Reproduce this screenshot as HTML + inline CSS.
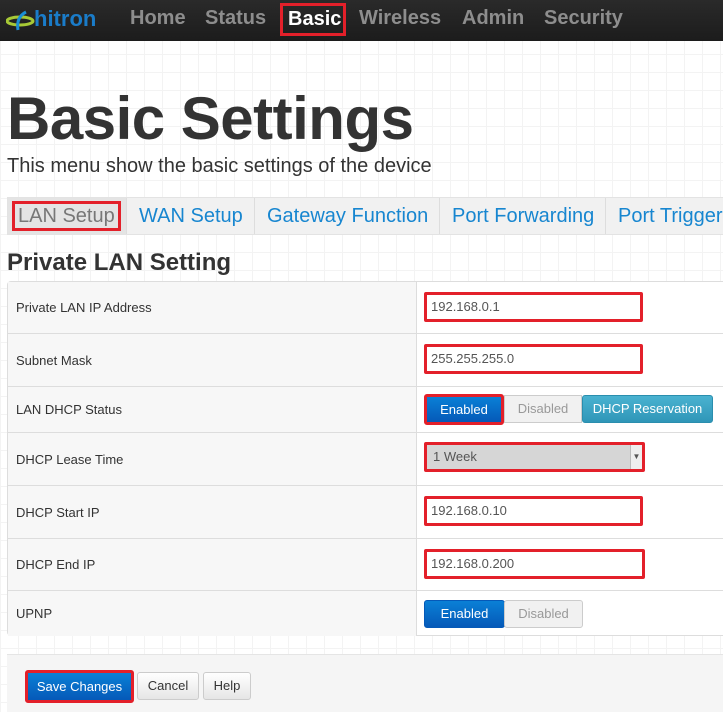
<!DOCTYPE html>
<html><head><meta charset="utf-8"><style>
*{box-sizing:border-box;margin:0;padding:0}
body{width:723px;height:712px;overflow:hidden;position:relative;font-family:"Liberation Sans",sans-serif;background:#fff;
background-image:linear-gradient(#f3f3f3 1px,transparent 1px),linear-gradient(90deg,#f3f3f3 1px,transparent 1px);background-size:18px 18px;}
.a{position:absolute}
.nav{left:0;top:0;width:723px;height:41px;background:linear-gradient(#2a2a2a,#1c1c1c);}
.nav span{position:absolute;top:7px;font-size:20px;font-weight:bold;color:#8d8d8d;white-space:nowrap}
h1{position:absolute;left:7px;top:84px;font-size:60px;font-weight:bold;color:#333;letter-spacing:-0.5px}
.sub{left:7px;top:155px;font-size:20px;color:#333}
.tabs{left:7px;top:197px;width:716px;height:38px;background:#f1f1f1;border:1px solid #e3e3e3;border-right:none;overflow:hidden}
.tab{position:absolute;top:0;height:36px;line-height:36px;font-size:20px;color:#1786d0;border-right:1px solid #ddd;padding:0 12px;white-space:nowrap}
h2{position:absolute;left:7px;top:249px;font-size:24px;font-weight:bold;color:#333}
.tbl{left:7px;top:281px;width:716px;height:355px;border:1px solid #ddd;border-right:none;border-radius:4px 0 0 4px;background:#fff}
.row{position:absolute;left:0;width:716px;border-bottom:1px solid #ddd}
.lab{position:absolute;left:0;top:0;bottom:0;width:409px;background:#f7f7f7;border-right:1px solid #ddd;font-size:13px;color:#333;padding-left:8px;display:flex;align-items:center}
.inp{position:absolute;left:424px;width:219px;height:30px;border:3px solid #e3202a;border-radius:2px;background:#fff;font-size:13px;color:#555;padding-left:4px;line-height:24px}
.btn{position:absolute;height:28px;font-size:13px;text-align:center;line-height:26px;border:1px solid #ccc;border-radius:3px;white-space:nowrap}
</style></head><body>
<div class="a nav">
 <svg class="a" style="left:6px;top:9px" width="34" height="24" viewBox="0 0 34 24"><ellipse cx="14" cy="12" rx="13" ry="4" fill="none" stroke="#a7c936" stroke-width="3"/><path d="M20 3 Q10 8 12 21" fill="none" stroke="#1a8fd6" stroke-width="3"/></svg>
 <span style="left:34px;top:6px;color:#1a7cc9;font-size:22px">hitron</span>
 <span style="left:130px">Home</span>
 <span style="left:205px">Status</span>
 <span style="left:280px;top:3px;width:66px;height:33px;border:3px solid #e3202a;color:#fff;padding:2px 0 0 5px">Basic</span>
 <span style="left:359px">Wireless</span>
 <span style="left:462px">Admin</span>
 <span style="left:544px">Security</span>
</div>
<h1>Basic Settings</h1>
<div class="a sub">This menu show the basic settings of the device</div>
<div class="a tabs">
 <div class="tab" style="left:0;width:119px;background:#e4e4e4;color:#777;padding:0 4px"><span style="display:inline-block;border:3px solid #e3202a;line-height:24px;height:30px;padding:0 3px;margin-top:3px">LAN Setup</span></div>
 <div class="tab" style="left:119px;width:128px">WAN Setup</div>
 <div class="tab" style="left:247px;width:185px">Gateway Function</div>
 <div class="tab" style="left:432px;width:166px">Port Forwarding</div>
 <div class="tab" style="left:598px;width:130px;border:none">Port Trigger</div>
</div>
<h2>Private LAN Setting</h2>
<div class="a tbl">
 <div class="row" style="top:0;height:52px"><div class="lab">Private LAN IP Address</div></div>
 <div class="row" style="top:52px;height:53px"><div class="lab">Subnet Mask</div></div>
 <div class="row" style="top:105px;height:46px"><div class="lab">LAN DHCP Status</div></div>
 <div class="row" style="top:151px;height:53px"><div class="lab">DHCP Lease Time</div></div>
 <div class="row" style="top:204px;height:53px"><div class="lab">DHCP Start IP</div></div>
 <div class="row" style="top:257px;height:52px"><div class="lab">DHCP End IP</div></div>
 <div class="row" style="top:309px;height:45px;border:none"><div class="lab">UPNP</div></div>
</div>
<div class="inp" style="top:292px">192.168.0.1</div>
<div class="inp" style="top:344px">255.255.255.0</div>
<div class="btn" style="left:424px;top:394px;width:80px;height:31px;background:linear-gradient(#0a80d6,#0559b8);color:#fff;border:3px solid #e3202a;line-height:25px">Enabled</div>
<div class="btn" style="left:504px;top:395px;width:78px;background:#f1f1f1;color:#999;border-radius:0">Disabled</div>
<div class="btn" style="left:582px;top:395px;width:131px;background:linear-gradient(#4ab2d0,#2f96b8);color:#fff;border-color:#2a8eae">DHCP Reservation</div>
<div class="inp" style="top:442px;width:221px;background:#d6d6d6;padding-left:6px">1 Week<span style="position:absolute;right:0;top:0;width:12px;height:24px;background:#eee;border-left:1px solid #bbb;font-size:8px;text-align:center">▼</span></div>
<div class="inp" style="top:496px">192.168.0.10</div>
<div class="inp" style="top:549px;width:221px">192.168.0.200</div>
<div class="btn" style="left:424px;top:600px;width:81px;background:linear-gradient(#0a80d6,#0559b8);color:#fff;border-color:#0559b8">Enabled</div>
<div class="btn" style="left:504px;top:600px;width:79px;background:#f1f1f1;color:#999">Disabled</div>
<div class="a" style="left:7px;top:654px;width:716px;height:58px;background:#f5f5f5;border-top:1px solid #e5e5e5"></div>
<div class="btn" style="left:25px;top:670px;width:109px;height:33px;background:linear-gradient(#0a80d6,#0559b8);color:#fff;border:3px solid #e3202a;line-height:27px">Save Changes</div>
<div class="btn" style="left:137px;top:672px;width:62px;background:linear-gradient(#fff,#e6e6e6);color:#333">Cancel</div>
<div class="btn" style="left:203px;top:672px;width:48px;background:linear-gradient(#fff,#e6e6e6);color:#333">Help</div>
</body></html>
